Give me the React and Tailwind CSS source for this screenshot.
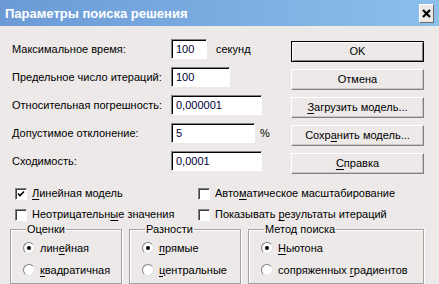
import React from 'react';

const font = { fontFamily: '"Liberation Sans", Arial, sans-serif' };

function U({ children }) {
    return <span className="underline underline-offset-[2px]">{children}</span>;
}

function Field({ label, width, value, after }) {
    return (
        <div className="flex items-center h-[20px] whitespace-nowrap">
            <div className="w-[159px] shrink-0">{label}</div>
            <div
                className={`h-[20px] ${width} bg-white border border-t-[#808080] border-l-[#808080] border-r-white border-b-white shadow-[inset_1px_1px_0_#000] flex items-center pl-[4px] text-[#000033]`}
            >
                {value}
            </div>
            {after}
        </div>
    );
}

function Button({ children, primary }) {
    return (
        <div
            className={`h-[21px] w-[133px] flex items-center justify-center bg-[#ece9e8] whitespace-nowrap ${
                primary
                    ? 'border border-black shadow-[inset_1px_1px_0_#fff,inset_-1px_-1px_0_#808080]'
                    : 'border border-t-white border-l-white border-r-[#808080] border-b-[#808080] shadow-[inset_-1px_-1px_0_#c8c6c2]'
            }`}
        >
            {children}
        </div>
    );
}

function Check({ checked, children }) {
    return (
        <div className="flex items-center h-[13px] gap-[5px] whitespace-nowrap">
            <div className="w-[12px] h-[12px] shrink-0 bg-white border border-t-[#808080] border-l-[#808080] border-r-white border-b-white shadow-[inset_1px_1px_0_#404040] flex items-center justify-center">
                {checked && (
                    <svg width="8" height="8" viewBox="0 0 8 8">
                        <path d="M1 3.5 L3 5.5 L7 1.5" stroke="#000" strokeWidth="1.6" fill="none" />
                    </svg>
                )}
            </div>
            <span>{children}</span>
        </div>
    );
}

function Radio({ checked, children }) {
    return (
        <div className="flex items-center h-[14px] gap-[5px] whitespace-nowrap">
            <div className="w-[12px] h-[12px] shrink-0 rounded-full bg-white border border-t-[#808080] border-l-[#808080] border-r-[#e0e0e0] border-b-[#e0e0e0] flex items-center justify-center">
                {checked && <div className="w-[4px] h-[4px] rounded-full bg-black" />}
            </div>
            <span>{children}</span>
        </div>
    );
}

function Group({ title, width, children }) {
    return (
        <fieldset
            className={`${width} h-[61px] border border-[#a3a29e] shadow-[1px_1px_0_#fff,inset_1px_1px_0_#fff] pl-[12px] pt-[5px] flex flex-col gap-[8px]`}
        >
            <legend className="ml-[3px] px-[1px] leading-[13px]">{title}</legend>
            {children}
        </fieldset>
    );
}

export default function App() {
    return (
        <div className="w-[439px] h-[284px] bg-[#ece9e8] overflow-hidden text-[11px] text-black leading-none" style={font}>
            {/* Title bar */}
            <div className="h-[26px] flex items-center justify-between pl-[5px] pr-[5px] bg-gradient-to-r from-[#6b9ad6] to-[#8cbfea]">
                <span className="text-white font-bold text-[13px]">Параметры поиска решения</span>
                <div className="w-[15px] h-[19px] bg-[#ece9e8] border border-t-white border-l-white border-r-[#6a6a6a] border-b-[#6a6a6a] flex items-center justify-center">
                    <svg width="9" height="9" viewBox="0 0 9 9">
                        <path d="M1 1 L8 8 M8 1 L1 8" stroke="#000" strokeWidth="2.2" />
                    </svg>
                </div>
            </div>

            {/* Fields + buttons */}
            <div className="flex pl-[12px] pt-[13px]">
                <div className="w-[279px] flex flex-col gap-[8px]">
                    <Field label="Максимальное время:" width="w-[36px]" value="100" after={<span className="ml-[9px]">секунд</span>} />
                    <Field label="Предельное число итераций:" width="w-[59px]" value="100" />
                    <Field label="Относительная погрешность:" width="w-[91px]" value="0,000001" />
                    <Field label="Допустимое отклонение:" width="w-[84px]" value="5" after={<span className="ml-[5px]">%</span>} />
                    <Field label="Сходимость:" width="w-[91px]" value="0,0001" />
                </div>
                <div className="flex flex-col gap-[7px] pt-[2px]">
                    <Button primary>OK</Button>
                    <Button>Отмена</Button>
                    <Button><U>З</U>агрузить модель...</Button>
                    <Button>Сохр<U>а</U>нить модель...</Button>
                    <Button><U>С</U>правка</Button>
                </div>
            </div>

            {/* Checkboxes */}
            <div className="grid grid-cols-[183px_1fr] gap-y-[8px] pl-[15px] pt-[13px]">
                <Check checked><U>Л</U>инейная модель</Check>
                <Check>Авто<U>м</U>атическое масштабирование</Check>
                <Check>Неотрицательн<U>ы</U>е значения</Check>
                <Check>Показывать <U>р</U>езультаты итераций</Check>
            </div>

            {/* Groups */}
            <div className="flex gap-[7px] pl-[10px] pt-[2px]">
                <Group title="Оценки" width="w-[112px]">
                    <Radio checked>лин<U>е</U>йная</Radio>
                    <Radio><U>к</U>вадратичная</Radio>
                </Group>
                <Group title="Разности" width="w-[112px]">
                    <Radio checked><U>п</U>рямые</Radio>
                    <Radio><U>ц</U>ентральные</Radio>
                </Group>
                <Group title="Метод поиска" width="w-[176px]">
                    <Radio checked><U>Н</U>ьютона</Radio>
                    <Radio>сопряженных <U>г</U>радиентов</Radio>
                </Group>
            </div>
        </div>
    );
}
